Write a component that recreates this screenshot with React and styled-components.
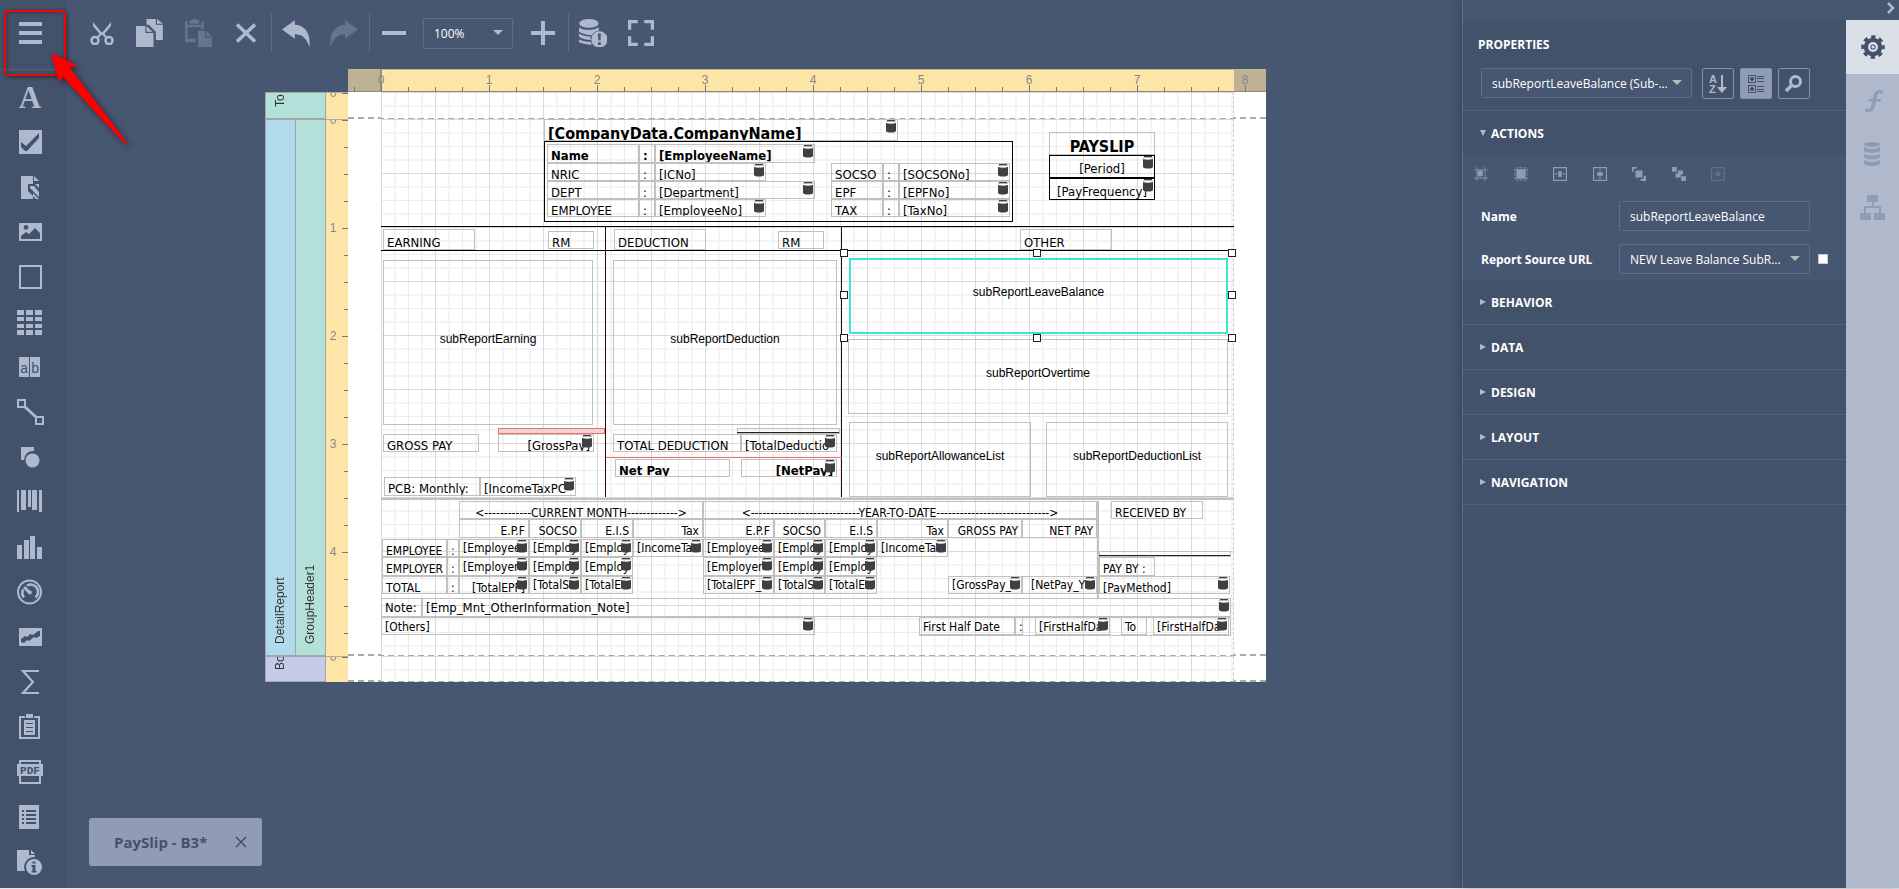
import React, { useState } from 'react';
import styled, { createGlobalStyle } from 'styled-components';

const UNIT = 108;

/* ---------- report data, measured from the origin of the detail band ---------- */

const panels = [
  { x: 163, y: 22, w: 469, h: 81, tone: '#000' },
  { x: 538, y: 498, w: 312, h: 19, tone: '#c0c0c0' },
];

const lines = [
  { x: 0, y: 107, w: 853, h: 1, tone: '#000' },
  { x: 0, y: 131, w: 853, h: 1, tone: '#000' },
  { x: 224, y: 107, w: 1, h: 271, tone: '#2a0606' },
  { x: 460, y: 107, w: 1, h: 271, tone: '#2a0606' },
  { x: 225, y: 338, w: 236, h: 1, tone: '#f26d6d' },
  { x: 0, y: 379, w: 853, h: 2, tone: '#c0c0c0' },
  { x: 716, y: 382, w: 2, h: 97, tone: '#c0c0c0' },
  { x: 356, y: 313, w: 102, h: 1, tone: '#222' },
  { x: 718, y: 436, w: 131, h: 1, tone: '#222' },
];

const lineBoxes = [
  { x: 117, y: 309, w: 107, h: 6, tone: '#f26d6d', fill: '#e9d5d5' },
  { x: 356, y: 309, w: 103, h: 6, tone: '#c0c0c0' },
  { x: 718, y: 432, w: 132, h: 6, tone: '#c0c0c0' },
];

const labels = [
  { x: 166, y: 25, w: 92, h: 19, text: 'Name', bold: true },
  { x: 258, y: 25, w: 16, h: 19, text: ':', bold: true },
  { x: 166, y: 44, w: 92, h: 18, text: 'NRIC' },
  { x: 258, y: 44, w: 16, h: 18, text: ':' },
  { x: 166, y: 62, w: 92, h: 18, text: 'DEPT' },
  { x: 258, y: 62, w: 16, h: 18, text: ':' },
  { x: 166, y: 80, w: 92, h: 18, text: 'EMPLOYEE' },
  { x: 258, y: 80, w: 16, h: 18, text: ':' },
  { x: 450, y: 44, w: 52, h: 18, text: 'SOCSO' },
  { x: 502, y: 44, w: 16, h: 18, text: ':' },
  { x: 450, y: 62, w: 52, h: 18, text: 'EPF' },
  { x: 502, y: 62, w: 16, h: 18, text: ':' },
  { x: 450, y: 80, w: 52, h: 18, text: 'TAX' },
  { x: 502, y: 80, w: 16, h: 18, text: ':' },
  { x: 668, y: 13, w: 106, h: 23, text: 'PAYSLIP', title: true, align: 'center' },
  { x: 2, y: 110, w: 92, h: 21, text: 'EARNING', base: 'deep' },
  { x: 167, y: 112, w: 46, h: 18, text: 'RM' },
  { x: 233, y: 110, w: 92, h: 21, text: 'DEDUCTION', base: 'deep' },
  { x: 397, y: 112, w: 46, h: 18, text: 'RM' },
  { x: 639, y: 110, w: 92, h: 21, text: 'OTHER', base: 'deep' },
  { x: 2, y: 315, w: 96, h: 18, text: 'GROSS PAY' },
  { x: 232, y: 315, w: 128, h: 18, text: 'TOTAL DEDUCTION' },
  { x: 234, y: 340, w: 115, h: 18, text: 'Net Pay', bold: true },
  { x: 3, y: 358, w: 96, h: 19, text: 'PCB: Monthly:' },
  { x: 78, y: 382, w: 244, h: 18, text: '<------------CURRENT MONTH------------->', small: true, align: 'center' },
  { x: 322, y: 382, w: 394, h: 18, text: '<----------------------------YEAR-TO-DATE----------------------------->', small: true, align: 'center' },
  { x: 78, y: 400, w: 70, h: 19, text: 'E.P.F', small: true, align: 'right' },
  { x: 148, y: 400, w: 52, h: 19, text: 'SOCSO', small: true, align: 'right' },
  { x: 200, y: 400, w: 52, h: 19, text: 'E.I.S', small: true, align: 'right' },
  { x: 252, y: 400, w: 70, h: 19, text: 'Tax', small: true, align: 'right' },
  { x: 322, y: 400, w: 71, h: 19, text: 'E.P.F', small: true, align: 'right' },
  { x: 393, y: 400, w: 51, h: 19, text: 'SOCSO', small: true, align: 'right' },
  { x: 444, y: 400, w: 52, h: 19, text: 'E.I.S', small: true, align: 'right' },
  { x: 496, y: 400, w: 71, h: 19, text: 'Tax', small: true, align: 'right' },
  { x: 567, y: 400, w: 74, h: 19, text: 'GROSS PAY', small: true, align: 'right' },
  { x: 641, y: 400, w: 75, h: 19, text: 'NET PAY', small: true, align: 'right' },
  { x: 1, y: 420, w: 65, h: 18, text: 'EMPLOYEE', small: true },
  { x: 66, y: 420, w: 12, h: 18, text: ':', small: true },
  { x: 1, y: 438, w: 65, h: 19, text: 'EMPLOYER', small: true },
  { x: 66, y: 438, w: 12, h: 19, text: ':', small: true },
  { x: 1, y: 457, w: 65, h: 18, text: 'TOTAL', small: true },
  { x: 66, y: 457, w: 12, h: 18, text: ':', small: true },
  { x: 730, y: 382, w: 92, h: 18, text: 'RECEIVED BY', small: true },
  { x: 718, y: 438, w: 56, h: 19, text: 'PAY BY :', small: true },
  { x: 0, y: 479, w: 41, h: 19, text: 'Note:', base: 'mid' },
  { x: 538, y: 498, w: 96, h: 18, text: 'First Half Date', small: true, base: 'mid' },
  { x: 634, y: 498, w: 8, h: 18, text: ':', small: true, base: 'mid' },
  { x: 740, y: 498, w: 26, h: 18, text: 'To', small: true, base: 'mid' },
];

const fields = [
  { x: 163, y: 0, w: 354, h: 22, text: '[CompanyData.CompanyName]', title: true },
  { x: 274, y: 25, w: 160, h: 19, text: '[EmployeeName]', bold: true },
  { x: 274, y: 44, w: 111, h: 18, text: '[ICNo]' },
  { x: 274, y: 62, w: 160, h: 18, text: '[Department]' },
  { x: 274, y: 80, w: 111, h: 18, text: '[EmployeeNo]' },
  { x: 518, y: 44, w: 111, h: 18, text: '[SOCSONo]' },
  { x: 518, y: 62, w: 111, h: 18, text: '[EPFNo]' },
  { x: 518, y: 80, w: 111, h: 18, text: '[TaxNo]' },
  { x: 668, y: 36, w: 106, h: 23, text: '[Period]', tone: '#000', base: 'deep', align: 'center' },
  { x: 668, y: 59, w: 106, h: 22, text: '[PayFrequency]', tone: '#000', base: 'deep', align: 'center' },
  { x: 117, y: 315, w: 96, h: 18, text: '[GrossPay]', align: 'right' },
  { x: 360, y: 315, w: 96, h: 18, text: '[TotalDeductio' },
  { x: 360, y: 340, w: 96, h: 18, text: '[NetPay]', bold: true, align: 'right' },
  { x: 99, y: 358, w: 96, h: 19, text: '[IncomeTaxPC' },
  { x: 78, y: 420, w: 70, h: 18, text: '[Employee', small: true, base: 'high' },
  { x: 148, y: 420, w: 52, h: 18, text: '[Employ', small: true, base: 'high' },
  { x: 200, y: 420, w: 52, h: 18, text: '[Employ', small: true, base: 'high' },
  { x: 252, y: 420, w: 70, h: 18, text: '[IncomeTa', small: true, base: 'high' },
  { x: 322, y: 420, w: 71, h: 18, text: '[Employee', small: true, base: 'high' },
  { x: 393, y: 420, w: 51, h: 18, text: '[Employ', small: true, base: 'high' },
  { x: 444, y: 420, w: 52, h: 18, text: '[Employ', small: true, base: 'high' },
  { x: 496, y: 420, w: 71, h: 18, text: '[IncomeTa', small: true, base: 'high' },
  { x: 78, y: 438, w: 70, h: 19, text: '[Employer', small: true, base: 'mid' },
  { x: 148, y: 438, w: 52, h: 19, text: '[Employ', small: true, base: 'mid' },
  { x: 200, y: 438, w: 52, h: 19, text: '[Employ', small: true, base: 'mid' },
  { x: 322, y: 438, w: 71, h: 19, text: '[Employer', small: true, base: 'mid' },
  { x: 393, y: 438, w: 51, h: 19, text: '[Employ', small: true, base: 'mid' },
  { x: 444, y: 438, w: 52, h: 19, text: '[Employ', small: true, base: 'mid' },
  { x: 78, y: 457, w: 70, h: 18, text: '[TotalEPF]', small: true, align: 'right' },
  { x: 148, y: 457, w: 52, h: 18, text: '[TotalS', small: true, base: 'high' },
  { x: 200, y: 457, w: 52, h: 18, text: '[TotalE', small: true, base: 'high' },
  { x: 322, y: 457, w: 71, h: 18, text: '[TotalEPF_', small: true, base: 'high' },
  { x: 393, y: 457, w: 51, h: 18, text: '[TotalS', small: true, base: 'high' },
  { x: 444, y: 457, w: 52, h: 18, text: '[TotalE', small: true, base: 'high' },
  { x: 567, y: 457, w: 74, h: 18, text: '[GrossPay_', small: true, base: 'high' },
  { x: 641, y: 457, w: 75, h: 18, text: '[NetPay_Y', small: true, base: 'high', indent: 8 },
  { x: 718, y: 457, w: 131, h: 18, text: '[PayMethod]', small: true },
  { x: 41, y: 479, w: 809, h: 19, text: '[Emp_Mnt_OtherInformation_Note]', base: 'mid' },
  { x: 0, y: 498, w: 434, h: 18, text: '[Others]', small: true, base: 'mid' },
  { x: 654, y: 498, w: 75, h: 18, text: '[FirstHalfDa', small: true, base: 'mid' },
  { x: 772, y: 498, w: 76, h: 18, text: '[FirstHalfDa', small: true, base: 'mid' },
];

const subReports = [
  { x: 2, y: 141, w: 210, h: 165, name: 'subReportEarning' },
  { x: 232, y: 141, w: 224, h: 165, name: 'subReportDeduction' },
  { x: 468, y: 139, w: 379, h: 76, name: 'subReportLeaveBalance', selected: true },
  { x: 467, y: 220, w: 380, h: 75, name: 'subReportOvertime' },
  { x: 468, y: 303, w: 182, h: 75, name: 'subReportAllowanceList' },
  { x: 665, y: 303, w: 182, h: 75, name: 'subReportDeductionList' },
];

const handles = [
  [459, 130], [652, 130], [847, 130],
  [459, 172], [847, 172],
  [459, 215], [652, 215], [847, 215],
];

/* ---------- icons ---------- */

const Svg = ({ size = 24, children, ...rest }) => (
  <svg width={size} height={size} viewBox='0 0 24 24' fill='currentColor' aria-hidden='true' {...rest}>
    {children}
  </svg>
);

const MenuIcon = () => (
  <Svg>
    <path d='M1 1h23v4H1zM1 10h23v4H1zM1 19h23v4H1z' />
  </Svg>
);

const tools = [
  {
    name: 'Label',
    icon: (
      <text x='12' y='23' textAnchor='middle' fontFamily='"Liberation Serif", serif' fontWeight='700' fontSize='31'>
        A
      </text>
    ),
  },
  {
    name: 'Check Box',
    icon: <path fillRule='evenodd' d='M1 0h23v24H1zM3 12v5l4 4h2L21 8V3L8 16z' />,
  },
  {
    name: 'Rich Text',
    icon: (
      <path fillRule='evenodd' d='M3 1h12v8h6v4l-4-4h-7v7l8 8H3zM16 1v5h5zM12 11h4l5 6v5l-9-9zM15 18l6 6h-6z' />
    ),
  },
  {
    name: 'Picture Box',
    icon: (
      <path
        fillRule='evenodd'
        d='M1 3h23v18H1zM3 16l5-4 3 2 6-6 5 5v6H3zM8 5a2.400 2.400 0 1 1 0 4.800 2.400 2.400 0 0 1 0-4.800z'
      />
    ),
  },
  { name: 'Panel', icon: <path d='M2 1h21v22H2z' fill='none' stroke='currentColor' strokeWidth='2' /> },
  {
    name: 'Table',
    icon: (
      <path d='M-1 0h7v5h-7zM8 0h7v5H8zM17 0h7v5h-7zM-1 7h7v4h-7zM8 7h7v4H8zM17 7h7v4h-7zM-1 14h7v4h-7zM8 14h7v4H8zM17 14h7v4h-7zM-1 20h7v5h-7zM8 20h7v5H8zM17 20h7v5h-7z' />
    ),
  },
  {
    name: 'Character Comb',
    icon: (
      <>
        <path d='M1 2h10v20H1zM12 2h10v20H12z' />
        <g fill='#43526b' fontFamily='"Liberation Mono", monospace' fontSize='14'>
          <text x='2' y='18'>a</text>
          <text x='13' y='18'>b</text>
        </g>
      </>
    ),
  },
  {
    name: 'Line',
    icon: (
      <g fill='none' stroke='currentColor'>
        <path strokeWidth='2' d='M0 0h7v7H0zM18 17h7v7h-7z' />
        <path strokeWidth='3' d='M7 7l11 10' />
      </g>
    ),
  },
  {
    name: 'Shape',
    icon: (
      <>
        <path d='M3 2h13v4a9 9 0 0 0-10 9H3z' />
        <circle cx='14.500' cy='15.500' r='7' />
      </>
    ),
  },
  {
    name: 'Bar Code',
    icon: <path d='M-1 0h2v22h-2zM3 0h5v20H3zM10 0h3v17h-3zM14 0h5v20h-5zM21 0h3v22h-3z' />,
  },
  { name: 'Chart', icon: <path d='M-1 10h5v14h-5zM6 5h5v19H6zM12 1h5v23h-5zM19 12h5v12h-5z' /> },
  {
    name: 'Gauge',
    icon: (
      <g fill='none' stroke='currentColor' strokeWidth='2'>
        <circle cx='11.500' cy='12' r='11.500' />
        <path strokeWidth='2.600' d='M6 17.500a7.300 7.300 0 0 1-.8-8M9 5.600a7.300 7.300 0 0 1 8.500 11.800' />
        <path strokeWidth='3' d='M6 7l5 5' />
        <circle cx='11.800' cy='12.500' r='2' fill='currentColor' stroke='none' />
      </g>
    ),
  },
  {
    name: 'Sparkline',
    icon: <path fillRule='evenodd' d='M1 3h23v18H1zM3 14l4-3 2 1 3-3 3 1 5-4h2v5l-4 2-2-1-5 4-2-1-3 3-3-1z' />,
  },
  { name: 'Pivot Grid', icon: <path d='M21 1H5l10 11L5 23h16' fill='none' stroke='currentColor' strokeWidth='2.200' /> },
  {
    name: 'Sub Report',
    icon: (
      <path
        fillRule='evenodd'
        d='M8-1h7v4H8zM1 1h6v2H3v19h17V3h-4V1h6v23H1zM6 5h11v15H6zM8 8v1h7V8zM8 12v1h7v-1zM8 16v1h7v-1z'
      />
    ),
  },
  {
    name: 'PDF Content',
    icon: (
      <>
        <path d='M1 0h22v4h-2V2H3v2H1zM-1 4h26v12H-1zM1 16h2v6h18v-6h2v8H1z' />
        <text x='12' y='14' textAnchor='middle' fill='#43526b' fontFamily='"Liberation Mono", monospace' fontWeight='700' fontSize='11'>
          PDF
        </text>
      </>
    ),
  },
  {
    name: 'Table of Contents',
    icon: (
      <path
        fillRule='evenodd'
        d='M1 0h20v24H1zM4 5v2h2V5zM8 5v2h10V5zM4 9v2h2V9zM8 9v2h10V9zM4 13v2h2v-2zM8 13v2h10v-2zM4 17v2h2v-2zM8 17v2h10v-2z'
      />
    ),
  },
  {
    name: 'Page Info',
    icon: (
      <>
        <path d='M-1 0h12v5h6v2a10 10 0 0 0-10 14h-8zM13 0v4h4z' />
        <path fillRule='evenodd' d='M16 9a8 8 0 1 1 0 16 8 8 0 0 1 0-16zM14.500 11.500v2h3v-2zM13.500 15v2h1v4h-1v1.500h5V21h-1v-6z' />
      </>
    ),
  },
];

const CutIcon = () => (
  <Svg>
    <path d='M3 1l9 11-1.500 2L3 5zM21 1l-9 11 1.500 2L21 5z' />
    <g fill='none' stroke='currentColor' strokeWidth='2.600'>
      <circle cx='5' cy='19.500' r='3.500' />
      <circle cx='19' cy='19.500' r='3.500' />
      <path d='M7 17l5-5 5 5' strokeWidth='2' />
    </g>
  </Svg>
);

const CopyIcon = () => (
  <Svg size={28}>
    <path d='M9 0h8v5h6v13h-6v-7l-6-6H9zM18 0v4h5z' />
    <path d='M0 6h8v6h7v12H0zM9 6v5h5z' />
  </Svg>
);

const PasteIcon = () => (
  <Svg size={28}>
    <path d='M1 2h2v3h12V2h2v7h-2V7H3v10h7v3H1zM5 1h2V0h4v1h2v3H5z' />
    <path d='M12 10h6v6h6v8H12zM19 10v5h5z' />
  </Svg>
);

const DeleteIcon = () => (
  <Svg>
    <path d='M3 3.500l18 17M21 3.500L3 20.500' stroke='currentColor' strokeWidth='3.600' />
  </Svg>
);

const UndoIcon = ({ flip }) => (
  <Svg size={28} transform={flip ? 'scale(-1 1)' : undefined}>
    <path d='M0 9L11 1v4c8 0 14 7 12.500 19C21 16 17 13 11 13v4z' />
  </Svg>
);

const MinusIcon = () => (
  <Svg>
    <path d='M0 10h24v4H0z' />
  </Svg>
);

const PlusIcon = () => (
  <Svg>
    <path d='M10 0h4v10h10v4H14v10h-4V14H0v-4h10z' />
  </Svg>
);

const ValidateIcon = () => (
  <Svg size={28}>
    <ellipse cx='8.500' cy='3.800' rx='8.300' ry='3.800' />
    <path d='M0 7c3 3 13 3 17 0v3c-3 0-5 2-6 4-4 0-8-1-11-3zM0 12.500c3 2 6 2.500 10 2.500v3c-4 0-8-1-10-3zM0 17.500c3 1.500 6 2 10 2l1 2.500c-5 0-9-1-11-2z' />
    <path fillRule='evenodd' d='M17.500 10.500a7 7 0 1 1 0 14 7 7 0 0 1 0-14zM16.200 12.500l.4 6h1.800l.4-6zM16.300 20v2.300h2.400V20z' />
  </Svg>
);

const FullScreenIcon = () => (
  <Svg size={26}>
    <path d='M0 0h9v3H3v6H0zM15 0h9v9h-3V3h-6zM0 15h3v6h6v3H0zM21 15h3v9h-9v-3h6z' />
  </Svg>
);

const SortIcon = () => (
  <Svg>
    <g fontFamily='"Liberation Sans", sans-serif' fontWeight='700' fontSize='11'>
      <text x='3' y='11'>A</text>
      <text x='3' y='21'>Z</text>
    </g>
    <path d='M15 3h2v12h4l-5 6-5-6h4z' />
  </Svg>
);

const CategoryIcon = () => (
  <Svg>
    <path
      fillRule='evenodd'
      d='M4 3h8v8H4zM5 4v6h6V4zM4 13h8v8H4zM5 14v6h6v-6zM7 5h2v1h1v2H9v1H7V8H6V6h1zM7 15h2v1h1v2H9v1H7v-1H6v-2h1zM13 4h7v1h-7zM13 6h7v1h-7zM13 9h7v1h-7zM13 14h7v1h-7zM13 17h7v1h-7zM13 19h7v1h-7z'
    />
  </Svg>
);

const SearchIcon = () => (
  <Svg>
    <circle cx='13.500' cy='9.500' r='5' fill='none' stroke='currentColor' strokeWidth='3' />
    <path d='M10 13l-6 6' stroke='currentColor' strokeWidth='3.500' />
  </Svg>
);

const actions = [
  {
    name: 'Align to grid',
    icon: (
      <>
        <path d='M4 0h2v24H4zM18 0h2v24h-2zM6 4h12v2H6zM0 18h24v2H0zM0 4h3v2H0zM21 4h3v2h-3z' opacity='0.700' />
        <path d='M6 6h9v10H6z' />
      </>
    ),
  },
  { name: 'Size to grid', icon: <path d='M4 4h16v16H4zM4 0h2v3H4zM18 0h2v3h-2zM0 4h3v2H0zM21 4h3v2h-3zM0 18h3v2H0zM21 18h3v2h-3zM4 21h2v3H4zM18 21h2v3h-2zM9 1h6v1H9zM9 22h6v1H9zM1 9h1v6H1zM22 9h1v6h-1z' /> },
  { name: 'Center horizontally', icon: <path fillRule='evenodd' d='M0 0h24v24H0zM2 2v20h20V2zM9 7h6v10H9zM3 11h5v2H3zM16 11h5v2h-5z' /> },
  { name: 'Center vertically', icon: <path fillRule='evenodd' d='M0 0h24v24H0zM2 2v20h20V2zM7 9h10v6H7zM11 3h2v5h-2zM11 16h2v5h-2z' /> },
  { name: 'Bring to front', icon: <path d='M0 0h8v3H3v5H0zM6 6h12v12H6zM20 15h4v9h-9v-4h5z' /> },
  { name: 'Send to back', icon: <path d='M0 0h8v8H0zM10 6h9v7h-4v5H6v-7h4zM16 16h8v8h-8z' /> },
  {
    name: 'Fit to container',
    off: true,
    icon: <path fillRule='evenodd' d='M0 0h24v24H0zM2 2v20h20V2zM8 8h8v8H8zM12 3l2 3h-4zM12 21l2-3h-4zM3 12l3-2v4zM21 12l-3-2v4z' />,
  },
];

const sideTabs = [
  {
    name: 'Properties',
    icon: (
      <>
        <circle cx='12' cy='12' r='6' fill='none' stroke='currentColor' strokeWidth='6.500' />
        <circle cx='12' cy='12' r='10' fill='none' stroke='currentColor' strokeWidth='3.600' strokeDasharray='4.200 3.654' strokeDashoffset='2.100' />
        <circle cx='12' cy='12' r='3.600' fill='#dadee6' />
        <circle cx='12' cy='12' r='4' fill='none' stroke='#dadee6' strokeWidth='2' />
        <circle cx='12' cy='12' r='2.600' fill='currentColor' />
        <circle cx='12' cy='12' r='1.600' fill='#dadee6' />
      </>
    ),
  },
  {
    name: 'Expressions',
    icon: (
      <path d='M8 10h3.500c1-5 2.500-9 8-9 2 0 3 1 2.500 2.600-.6 1.600-2.500 1.600-3 0-2 .2-3 3-3.600 6.400H20l-.5 2.500H15c-1 6-2.500 10.500-8 10.500-2.500 0-3.500-1-3-2.600.6-1.600 2.700-1.500 3 .2 2.500 0 3.300-3.600 4.200-8.100H7.500z' />
    ),
  },
  {
    name: 'Field List',
    icon: (
      <>
        <ellipse cx='11' cy='1.500' rx='8' ry='2.500' />
        <path d='M3 4c4 2.500 12 2.500 16 0v4c-4 2.500-12 2.500-16 0zM3 10.500c4 2.500 12 2.500 16 0v4c-4 2.500-12 2.500-16 0zM3 17c4 2.500 12 2.500 16 0v4c-4 2.500-12 2.500-16 0z' />
      </>
    ),
  },
  {
    name: 'Report Explorer',
    icon: <path d='M6-2h11v7h-4v4h7v7h4v7H13v-7h5v-5H5v5h5v7H-1v-7h4V9h8V5H6z' />,
  },
];

const DbMark = () => (
  <Mark viewBox='0 0 10 14' aria-hidden='true'>
    <path d='M1 0h8v2H1zM0 4c3 1 7 1 10 0v8c-1 2-9 2-10 0z' />
    <path d='M0 2h10v1H0z' fill='#b5b5b5' />
  </Mark>
);

/* ---------- rulers ---------- */

const HorizontalRuler = () => {
  const ticks = Array.from({ length: 34 }, (_, i) => i - 1);
  return (
    <TopRuler viewBox='0 0 918 23'>
      <rect width='918' height='23' fill='#fde5a7' />
      <rect width='33' height='23' fill='#bfb294' />
      <rect x='886' width='32' height='23' fill='#bfb294' />
      <path d='M0 0h918v1H0z' fill='#c9b78b' />
      <path d='M0 22h918v1H0z' fill='#8f8a80' />
      <path d='M32 0h2v23h-2z' fill='#99958b' />
      {ticks.map((tick) => (
        <rect key={tick} x={33 + tick * 27} y={tick % 4 === 0 ? 16 : 18} width='1' height={tick % 4 === 0 ? 7 : 5} fill='#777' />
      ))}
      {Array.from({ length: 9 }, (_, n) => (
        <text key={n} x={33 + n * UNIT} y='15' textAnchor='middle'>
          {n}
        </text>
      ))}
    </TopRuler>
  );
};

const VerticalRuler = ({ height }) => {
  const count = Math.ceil(height / 27);
  const marks = Array.from({ length: count }, (_, i) => i);
  return (
    <SideRuler width='22' height={height}>
      {marks.map((tick) => (
        <rect key={tick} x={tick % 4 === 0 ? 16 : 18} y={tick * 27} width='6' height='1' fill='#777' />
      ))}
      {marks
        .filter((tick) => tick % 4 === 0)
        .map((tick) => (
          <text key={tick} x='7' y={tick * 27 + 4} textAnchor='middle'>
            {tick / 4}
          </text>
        ))}
    </SideRuler>
  );
};

/* ---------- page ---------- */

export default function App() {
  const [zoom, setZoom] = useState('100%');
  const [reportName, setReportName] = useState('subReportLeaveBalance');
  const [activeTab, setActiveTab] = useState('Properties');

  return (
    <Page>
      <GlobalStyle />
      <Sidebar>
        <MenuButton aria-label='Menu'>
          <MenuIcon />
        </MenuButton>
        <ToolList>
          {tools.map((tool) => (
            <ToolButton key={tool.name} aria-label={tool.name}>
              <Svg>{tool.icon}</Svg>
            </ToolButton>
          ))}
        </ToolList>
      </Sidebar>

      <Main>
        <Toolbar>
          <BarButton aria-label='Cut'><CutIcon /></BarButton>
          <BarButton aria-label='Copy'><CopyIcon /></BarButton>
          <BarButton aria-label='Paste' disabled><PasteIcon /></BarButton>
          <BarButton aria-label='Delete'><DeleteIcon /></BarButton>
          <Separator />
          <BarButton aria-label='Undo'><UndoIcon /></BarButton>
          <BarButton aria-label='Redo' disabled><UndoIcon flip /></BarButton>
          <Separator />
          <BarButton aria-label='Zoom out'><MinusIcon /></BarButton>
          <ZoomBox>
            <Select aria-label='Zoom' value={zoom} onChange={(e) => setZoom(e.target.value)}>
              <option>100%</option>
            </Select>
            <Caret />
          </ZoomBox>
          <BarButton aria-label='Zoom in'><PlusIcon /></BarButton>
          <Separator />
          <BarButton aria-label='Validate bindings'><ValidateIcon /></BarButton>
          <BarButton aria-label='Full screen'><FullScreenIcon /></BarButton>
        </Toolbar>

        <Canvas>
          <Surface>
            <HorizontalRuler />
            <Band $height={27}>
              <Captions>
                <Caption $fill='#b4e0da'><span>To</span></Caption>
              </Captions>
              <VerticalRuler height={27} />
              <BandBody><Grid /></BandBody>
            </Band>
            <Band $height={537}>
              <Captions>
                <Caption $fill='#b2daed'><span>DetailReport</span></Caption>
                <Caption $fill='#b4e0da'><span>GroupHeader1</span></Caption>
              </Captions>
              <VerticalRuler height={537} />
              <BandBody>
                <Grid>
                  {subReports.map((item) => (
                    <SubReport key={item.name} $box={item} $selected={item.selected}>
                      {item.name}
                    </SubReport>
                  ))}
                  {panels.map((item) => (
                    <Outline key={item.y} $box={item} />
                  ))}
                  {lineBoxes.map((item) => (
                    <Outline key={item.x} $box={item} />
                  ))}
                  {labels.map((item, index) => (
                    <Cell key={index} $box={item}>{item.text}</Cell>
                  ))}
                  {fields.map((item, index) => (
                    <Cell key={index} $box={item}>
                      {item.text}
                      <DbMark />
                    </Cell>
                  ))}
                  {lines.map((item, index) => (
                    <Rule key={index} $box={item} />
                  ))}
                  {handles.map(([x, y]) => (
                    <Handle key={`${x}-${y}`} $box={{ x, y, w: 8, h: 8 }} />
                  ))}
                </Grid>
              </BandBody>
            </Band>
            <Band $height={26}>
              <Captions>
                <Caption $fill='#c5cae6'><span>Bo</span></Caption>
              </Captions>
              <VerticalRuler height={26} />
              <BandBody><Grid /></BandBody>
            </Band>
          </Surface>
        </Canvas>

        <DocumentTabs>
          <DocumentTab>
            PaySlip - B3*
            <CloseButton aria-label='Close PaySlip - B3*'>
              <svg width='12' height='12' viewBox='0 0 12 12' aria-hidden='true'>
                <path d='M1 1l10 10M11 1L1 11' stroke='currentColor' strokeWidth='1.500' />
              </svg>
            </CloseButton>
          </DocumentTab>
        </DocumentTabs>
      </Main>

      <Aside>
        <CollapseBar>
          <CollapseButton aria-label='Collapse panel'>
            <svg width='8' height='12' viewBox='0 0 8 12' aria-hidden='true'>
              <path d='M1 1l5 5-5 5' fill='none' stroke='currentColor' strokeWidth='2.500' />
            </svg>
          </CollapseButton>
        </CollapseBar>
        <AsideBody>
          <Properties>
            <PanelHead>
              <PanelTitle>PROPERTIES</PanelTitle>
              <PickerRow>
                <SelectBox>
                  <Select aria-label='Selected element' defaultValue='current'>
                    <option value='current'>subReportLeaveBalance (Sub-...</option>
                  </Select>
                  <Caret />
                </SelectBox>
                <ModeButton aria-label='Sort alphabetically'><SortIcon /></ModeButton>
                <ModeButton aria-label='Group by category' $active><CategoryIcon /></ModeButton>
                <ModeButton aria-label='Search'><SearchIcon /></ModeButton>
              </PickerRow>
            </PanelHead>
            <SectionButton $open aria-expanded='true'>
              <Arrow $open />
              ACTIONS
            </SectionButton>
            <SectionBody>
              <ActionRow>
                {actions.map((action) => (
                  <ActionButton key={action.name} aria-label={action.name} disabled={action.off}>
                    <Svg size={14}>{action.icon}</Svg>
                  </ActionButton>
                ))}
              </ActionRow>
              <FieldRow>
                <label htmlFor='name'>Name</label>
                <TextInput id='name' value={reportName} onChange={(e) => setReportName(e.target.value)} />
              </FieldRow>
              <FieldRow>
                <label htmlFor='source'>Report Source URL</label>
                <SelectBox>
                  <Select id='source' defaultValue='leave'>
                    <option value='leave'>NEW Leave Balance SubR...</option>
                  </Select>
                  <Caret />
                </SelectBox>
                <Marker type='checkbox' aria-label='Report Source URL options' />
              </FieldRow>
            </SectionBody>
            {['BEHAVIOR', 'DATA', 'DESIGN', 'LAYOUT', 'NAVIGATION'].map((title) => (
              <SectionButton key={title} aria-expanded='false'>
                <Arrow />
                {title}
              </SectionButton>
            ))}
          </Properties>
          <SideTabs>
            {sideTabs.map((tab) => (
              <SideTab
                key={tab.name}
                aria-label={tab.name}
                $active={tab.name === activeTab}
                onClick={() => setActiveTab(tab.name)}
              >
                <Svg>{tab.icon}</Svg>
              </SideTab>
            ))}
          </SideTabs>
        </AsideBody>
      </Aside>

      <Highlight />
      <Pointer width='90' height='100' viewBox='0 0 90 100' aria-hidden='true'>
        <path d='M3 3l26 12-7 3 56 73q2 4-2 2L15 27l-4 5z' fill='#ff0000' />
      </Pointer>
    </Page>
  );
}

const GlobalStyle = createGlobalStyle`
  * {
    box-sizing: border-box;
  }

  body {
    margin: 0;
    background: #475671;
    font-family: 'Segoe UI', 'Open Sans', sans-serif;
    font-size: 12px;
    color: #fff;
  }

  button {
    border: none;
    padding: 0;
    background: none;
    color: inherit;
    font: inherit;
    cursor: pointer;
  }
`;

const Page = styled.div`
  display: flex;
  position: relative;
  min-height: 100vh;
  border-bottom: 1px solid #e4e7ec;
`;

const Sidebar = styled.nav`
  flex: none;
  width: 66px;
  background: #43526b;
  color: #afb9cd;
`;

const MenuButton = styled.button`
  display: flex;
  align-items: flex-start;
  width: 100%;
  height: 70px;
  padding: 21px 18px 0;
  border-bottom: 1px solid #50617f;
`;

const ToolList = styled.div`
  display: flex;
  flex-direction: column;
  padding-top: 4px;
`;

const ToolButton = styled.button`
  display: flex;
  align-items: center;
  height: 45px;
  padding-left: 18px;

  svg {
    overflow: visible;
  }
`;

const Main = styled.main`
  display: flex;
  flex: 1;
  flex-direction: column;
  min-width: 0;
`;

const Toolbar = styled.div`
  display: flex;
  align-items: center;
  height: 66px;
  padding-left: 12px;
  color: #afb9cd;
`;

const BarButton = styled.button`
  display: flex;
  align-items: center;
  justify-content: center;
  width: 48px;
  height: 38px;

  &:disabled {
    opacity: 0.3;
    cursor: default;
  }
`;

const Separator = styled.span`
  width: 1px;
  height: 38px;
  margin-left: 1px;
  background: #5f6d86;
`;

const SelectBox = styled.div`
  display: flex;
  flex: 1;
  position: relative;
  height: 30px;
  min-width: 0;
`;

const ZoomBox = styled(SelectBox)`
  flex: none;
  width: 90px;
  height: 31px;
  margin: 0 6px 0 5px;
`;

const Select = styled.select`
  appearance: none;
  width: 100%;
  padding: 0 24px 0 10px;
  border: 1px solid #5f6d86;
  border-radius: 2px;
  background: #475671;
  color: #fff;
  font: inherit;
`;

const Caret = styled.span`
  position: absolute;
  top: 50%;
  right: 10px;
  margin-top: -3px;
  border: solid transparent;
  border-width: 5px 5px 0;
  border-top-color: #b5b9be;
  pointer-events: none;
`;

const Canvas = styled.div`
  display: flex;
  flex: 1;
  justify-content: center;
  padding: 3px 0 0 3px;
`;

const Surface = styled.div`
  display: flex;
  flex: none;
  flex-direction: column;
`;

const rulerText = `
  text {
    fill: #888;
    font-family: 'Liberation Sans', Arial, sans-serif;
    font-size: 12px;
  }
`;

const TopRuler = styled.svg`
  align-self: flex-end;
  width: 918px;
  height: 23px;
  ${rulerText}
`;

const SideRuler = styled.svg`
  flex: none;
  border-top: 1px solid #b0aba0;
  background: #fde5a7;
  overflow: hidden;
  ${rulerText}
`;

const Band = styled.div`
  display: flex;
  height: ${({ $height }) => $height}px;
`;

const Captions = styled.div`
  display: flex;
  width: 61px;
  border: solid #a5a5a5;
  border-width: 1px 1px 1px 0;
`;

const Caption = styled.div`
  display: flex;
  flex: 1;
  padding: 0 0 11px 7px;
  border-left: 1px solid #a5a5a5;
  background: ${({ $fill }) => $fill};
  color: #333;
  font-family: 'Liberation Sans', Arial, sans-serif;
  font-size: 12px;
  line-height: 14px;
  overflow: hidden;

  span {
    writing-mode: vertical-rl;
    transform: rotate(180deg);
  }
`;

const BandBody = styled.div`
  width: 918px;
  padding: 0 32px 0 33px;
  border-bottom: 2px dashed #a9a9a9;
  background: #fff;
`;

const line = (deg, colour, width, start) =>
  `linear-gradient(${deg}, transparent ${start}px, ${colour} ${start}px, ${colour} ${start + width}px, transparent ${start + width}px)`;

const Grid = styled.div`
  position: relative;
  height: calc(100% + 1px);
  border-right: 1px dashed #d0d0d0;
  background-color: #fff;
  background-image: ${line('90deg', '#d9d9d9', 1, 0)}, ${line('180deg', '#d9d9d9', 1, 0)},
    ${line('90deg', '#ebebeb', 1, 27)}, ${line('180deg', '#ebebeb', 1, 27)},
    ${line('90deg', '#f4f4f4', 2, 13)}, ${line('180deg', '#f4f4f4', 2, 13)};
  background-size: 54px 54px, 54px 54px, 54px 54px, 54px 54px, 27px 27px, 27px 27px;
`;

const Placed = styled.div`
  position: absolute;
  left: ${({ $box }) => $box.x}px;
  top: ${({ $box }) => $box.y}px;
  width: ${({ $box }) => $box.w}px;
  height: ${({ $box }) => $box.h}px;
`;

const Outline = styled(Placed)`
  border: 1px solid ${({ $box }) => $box.tone};
  background: ${({ $box }) => $box.fill || 'none'};
`;

const Rule = styled(Placed)`
  background: ${({ $box }) => $box.tone};
`;

const baseLines = { high: 16, mid: 18, low: 21, deep: 25 };

const lineHeight = ({ title, small, base = 'low' }) => {
  if (title) return 27;
  return small && base === 'low' ? 23 : baseLines[base];
};

const Cell = styled(Placed)`
  padding: 0 ${({ $box }) => ($box.align === 'center' ? 0 : 3)}px 0 ${({ $box }) => ($box.align === 'center' ? 0 : $box.indent || 3)}px;
  border: 1px solid ${({ $box }) => $box.tone || '#c0c0c0'};
  color: #000;
  font-family: Tahoma, 'DejaVu Sans Condensed', sans-serif;
  font-size: ${({ $box }) => ($box.title ? 16 : $box.small ? 12 : 13)}px;
  font-weight: ${({ $box }) => ($box.title || $box.bold ? 700 : 400)};
  line-height: ${({ $box }) => lineHeight($box)}px;
  text-align: ${({ $box }) => $box.align || 'left'};
  white-space: nowrap;
  overflow: hidden;
`;

const Mark = styled.svg`
  position: absolute;
  top: -1px;
  right: 1px;
  width: 10px;
  height: 14px;
  fill: #404040;
`;

const SubReport = styled(Placed)`
  display: flex;
  align-items: center;
  justify-content: center;
  padding-bottom: 8px;
  border: ${({ $selected }) => ($selected ? '2px solid #3fe5d0' : '1px solid #c0c0c0')};
  color: #000;
  font-family: 'Liberation Sans', Arial, sans-serif;
  font-size: 12px;
`;

const Handle = styled(Placed)`
  border: 1px solid #222;
  background: #fff;
`;

const DocumentTabs = styled.div`
  display: flex;
  padding: 0 23px 22px;
`;

const DocumentTab = styled.div`
  display: flex;
  align-items: center;
  gap: 28px;
  height: 48px;
  padding: 0 15px 0 25px;
  border-radius: 3px;
  background: #8f9cb3;
  color: #43526b;
  font-size: 15px;
  font-weight: 700;
`;

const CloseButton = styled.button`
  display: flex;
`;

const Aside = styled.aside`
  display: flex;
  flex: none;
  flex-direction: column;
  width: 437px;
  border-left: 1px solid #5f6d86;
  box-shadow: 0 0 12px rgba(0, 0, 0, 0.25);
`;

const CollapseBar = styled.div`
  display: flex;
  align-items: center;
  justify-content: flex-end;
  height: 20px;
  padding: 0 4px 4px 0;
  background: #475671;
  color: #afb9cd;
`;

const CollapseButton = styled.button`
  display: flex;
`;

const AsideBody = styled.div`
  display: flex;
  flex: 1;
`;

const Properties = styled.section`
  flex: 1;
  min-width: 0;
  background: #43526b;
`;

const PanelHead = styled.header`
  padding: 16px 36px 11px 15px;
  border-bottom: 1px solid #50617f;
`;

const PanelTitle = styled.h2`
  margin: 0 0 14px;
  font-size: 12px;
  line-height: 18px;
`;

const PickerRow = styled.div`
  display: flex;
  gap: 6px;
  padding-left: 3px;

  ${SelectBox} {
    margin-right: 4px;
  }
`;

const ModeButton = styled.button`
  display: flex;
  align-items: center;
  justify-content: center;
  width: 32px;
  height: 31px;
  border: 1px solid #8391a9;
  border-radius: 2px;
  background: ${({ $active }) => ($active ? '#8f9cb3' : 'none')};
  color: ${({ $active }) => ($active ? '#43526b' : '#afb9cd')};
`;

const SectionButton = styled.button`
  display: flex;
  align-items: center;
  gap: 5px;
  width: 100%;
  height: 45px;
  padding-left: 17px;
  border-bottom: 1px solid ${({ $open }) => ($open ? 'transparent' : '#50617f')};
  font-weight: 700;
`;

const Arrow = styled.span`
  border: solid transparent;
  border-width: ${({ $open }) => ($open ? '6px 3px 0' : '3px 0 3px 6px')};
  border-top-color: ${({ $open }) => ($open ? '#afb9cd' : 'transparent')};
  border-left-color: ${({ $open }) => ($open ? 'transparent' : '#afb9cd')};
`;

const SectionBody = styled.div`
  padding: 11px 18px 6px;
  background: #475671;
`;

const ActionRow = styled.div`
  display: flex;
  justify-content: space-between;
  width: 251px;
  margin: 0 0 20px -7px;
  color: #8f9cb3;
`;

const ActionButton = styled.button`
  display: flex;

  &:disabled {
    opacity: 0.35;
  }
`;

const FieldRow = styled.div`
  display: flex;
  align-items: center;
  gap: 8px;
  margin-bottom: 13px;

  &:last-child {
    margin-bottom: 0;
  }

  label {
    width: 130px;
    font-weight: 700;
  }

  ${SelectBox}, input[type='text'] {
    flex: none;
    width: 191px;
  }
`;

const TextInput = styled.input.attrs({ type: 'text' })`
  height: 30px;
  padding: 0 10px;
  border: 1px solid #5f6d86;
  border-radius: 2px;
  background: #475671;
  color: #fff;
  font: inherit;
`;

const Marker = styled.input`
  appearance: none;
  width: 10px;
  height: 10px;
  margin: 0;
  border: 1px solid #c5cbd8;
  background: #fff;
`;

const SideTabs = styled.div`
  display: flex;
  flex-direction: column;
  width: 53px;
  background: #afb9cb;
`;

const SideTab = styled.button`
  display: flex;
  align-items: center;
  justify-content: center;
  height: 54px;
  background: ${({ $active }) => ($active ? '#dadee6' : 'none')};
  color: ${({ $active }) => ($active ? '#43526b' : '#8f9cb3')};

  svg {
    overflow: visible;
  }
`;

const Highlight = styled.div`
  position: absolute;
  top: 10px;
  left: 4px;
  width: 62px;
  height: 66px;
  border: 2px solid #f00;
  border-radius: 5px;
  box-shadow: 1px 1px 4px rgba(0, 0, 0, 0.5), inset 1px 1px 4px rgba(0, 0, 0, 0.3);
  pointer-events: none;
`;

const Pointer = styled.svg`
  position: absolute;
  top: 50px;
  left: 48px;
  filter: drop-shadow(2px 2px 3px rgba(0, 0, 0, 0.5));
  pointer-events: none;
`;
